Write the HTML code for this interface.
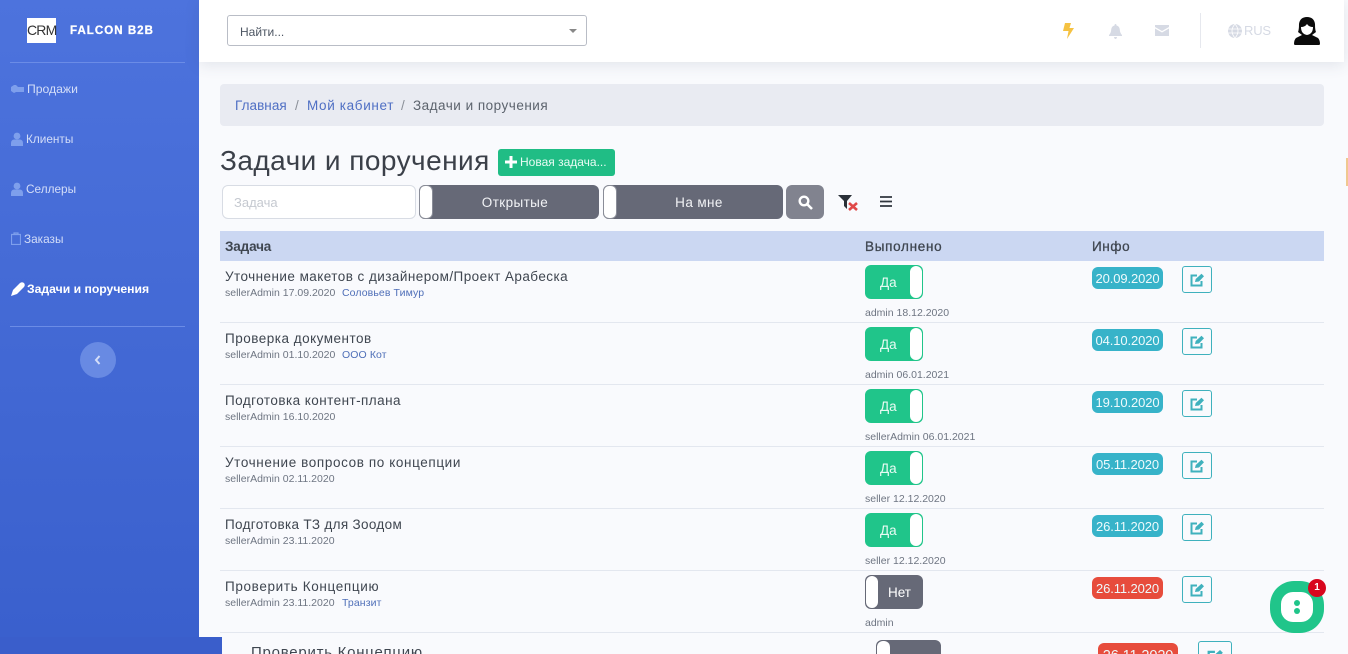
<!DOCTYPE html>
<html lang="ru"><head><meta charset="utf-8"><title>Задачи и поручения</title>
<style>
*{box-sizing:border-box}
html,body{margin:0;padding:0;width:1348px;height:654px;overflow:hidden;background:#f9fafd}
body{font-family:"Liberation Sans","Noto Sans CJK SC",sans-serif;color:#3e4450;position:relative}
div,a,span{position:absolute;white-space:nowrap}
svg{position:absolute;display:block}
.nav{left:0;font-size:12.2px;color:#d4def8;letter-spacing:0;margin-top:1px}
.t{left:225px;font-size:13.5px;letter-spacing:.45px;color:#3f4650;line-height:16px;margin-top:1px}
.s{left:225px;font-size:10.5px;color:#6e7582;line-height:13px;letter-spacing:0;margin-top:1px}
.l{font-size:10.5px;color:#4f6fb8;line-height:13px;letter-spacing:.1px;margin-top:1px}
.sep{left:220px;width:1104px;height:1px;background:#e3e7ef}
.tg{left:865px;width:58px;height:34px;background:#20c58a;border-radius:6px;color:#e8fbf3;font-size:13.5px;line-height:36px}
.tg i{position:absolute;right:1px;top:1px;width:12px;height:32px;background:#fff;border-radius:6px}
.tg b{position:absolute;left:15px;font-weight:400}
.no{background:#666977;color:#fff}
.no i{left:1px;right:auto}
.no b{left:23px}
.u{left:865px;font-size:10.5px;color:#6e7582;line-height:13px;letter-spacing:0;margin-top:1px}
.bd{left:1092px;width:71px;height:22px;border-radius:6px;background:#37b3c9;color:#eefafc;font-size:13px;line-height:24px;text-align:center;letter-spacing:-.1px}
.red{background:#e74c3c}
.ed{left:1182px;width:30px;height:27px;border:1px solid #3fb1bd;border-radius:3px;background:#f9fafd}
.ed svg{left:7px;top:6px}
.th{font-size:13.5px;font-weight:700;color:#3f4650;letter-spacing:.35px;line-height:16px;top:239px}
.bigt{left:419px;height:34px;background:#666977;border-radius:6px;color:#f2f3f6;font-size:13.5px;line-height:36px;text-align:center;letter-spacing:.4px}
.bigt i{position:absolute;left:0;top:0;width:14px;height:34px;background:#fff;border:1px solid #8a8d98;border-radius:6px}
</style></head>
<body>
<div style="left:0;top:0;width:199px;height:637px;background:linear-gradient(180deg,#4d73dd,#3a60cd)"></div>
<div style="left:0;top:637px;width:222px;height:17px;background:#3a5ecb"></div>
<div style="left:199px;top:0;width:1145px;height:62px;background:#fff;box-shadow:0 3px 14px rgba(60,70,100,.12)"></div>
<div style="left:1346px;top:158px;width:2px;height:28px;background:#f0c890"></div>

<div style="left:27px;top:18px;width:29px;height:25px;background:#fff;color:#333;font-size:14px;line-height:25px;text-align:center;letter-spacing:-.8px">CRM</div>
<div style="left:70px;top:24px;font-size:11.5px;font-weight:700;color:#fff;letter-spacing:1.05px;line-height:14px;-webkit-text-stroke:.3px #fff">FALCON B2B</div>
<div style="left:10px;top:62px;width:175px;height:1px;background:#6b8ce6"></div>
<div style="left:10px;top:326px;width:175px;height:1px;background:#6b8ce6"></div>

<svg style="left:11px;top:85px" width="13" height="8" viewBox="0 0 13 8"><path d="M0 2 3 0h2l2 2h6v5H5L3 8 0 6z" fill="#7e9fec"/></svg>
<div class="nav" style="left:27px;top:81px">Продажи</div>
<svg style="left:11px;top:132px" width="12" height="14" viewBox="0 0 12 14"><circle cx="6" cy="4" r="3.4" fill="#7e9fec"/><path d="M0 14v-3q0-3 3-3.500h6q3 .5 3 3.500v3z" fill="#7e9fec"/></svg>
<div class="nav" style="left:26px;top:131px;font-size:11.8px">Клиенты</div>
<svg style="left:11px;top:182px" width="12" height="14" viewBox="0 0 12 14"><circle cx="6" cy="4" r="3.400" fill="#7e9fec"/><path d="M0 14v-3q0-3 3-3.500h6q3 .5 3 3.500v3z" fill="#7e9fec"/></svg>
<div class="nav" style="left:26px;top:181px;font-size:11.8px">Селлеры</div>
<svg style="left:11px;top:232px" width="10" height="13" viewBox="0 0 10 13"><path d="M.5 2.500h9v10h-9zM3 2.500V1h4v1.500" fill="none" stroke="#7e9fec" stroke-width="1.200"/></svg>
<div class="nav" style="left:24px;top:231px;font-size:11.8px">Заказы</div>
<svg style="left:11px;top:282px" width="14" height="14" viewBox="0 0 14 14"><path d="M0 14 2 8 9 1q2-1.500 4 0 1.500 2 0 4L6 12z" fill="#fff"/></svg>
<div class="nav" style="left:27px;top:281px;color:#fff;font-weight:700;font-size:12.2px;letter-spacing:0">Задачи и поручения</div>
<div style="left:80px;top:342px;width:36px;height:36px;border-radius:50%;background:#688ae3"></div>
<svg style="left:94px;top:355px" width="7" height="10" viewBox="0 0 7 10"><path d="M5.500 1 2 5l3.500 4" fill="none" stroke="#d4def8" stroke-width="2"/></svg>

<div style="left:227px;top:15px;width:360px;height:31px;background:#fff;border:1px solid #b9bdc6;border-radius:3px"></div>
<div style="left:240px;top:24px;font-size:12px;color:#4d5663;line-height:16px">Найти...</div>
<svg style="left:569px;top:29px" width="8" height="4" viewBox="0 0 8 4"><path d="M0 0h8L4 4z" fill="#888"/></svg>

<svg style="left:1063px;top:23px" width="11" height="16" viewBox="0 0 11 16"><path d="M2 0h6L6.500 5H11L4 16l1.500-8H0z" fill="#f5c242"/></svg>
<svg style="left:1109px;top:24px" width="13" height="15" viewBox="0 0 13 15"><path d="M6.500 0q1 0 1 1.500 3 .8 3.300 4 .1 3.500 2.200 5.500v1H0v-1q2.100-2 2.200-5.500.3-3.200 3.300-4Q5.500 0 6.500 0zM5 13h3q-.3 2-1.500 2T5 13z" fill="#d6dae4"/></svg>
<svg style="left:1155px;top:25px" width="14" height="11" viewBox="0 0 14 11"><path d="M0 0h14v2L7 6 0 2zM0 3.500 7 7.500l7-4V11H0z" fill="#d6dae4"/></svg>
<div style="left:1200px;top:13px;width:1px;height:35px;background:#e6e8ee"></div>
<svg style="left:1228px;top:24px" width="14" height="14" viewBox="0 0 14 14"><circle cx="7" cy="7" r="7" fill="#d6dae4"/><path d="M0 5h14M0 9h14M7 0q-6 7 0 14M7 0q6 7 0 14" stroke="#fff" stroke-width=".8" fill="none"/></svg>
<div style="left:1244px;top:23px;font-size:13px;color:#d6dae4;line-height:16px;letter-spacing:-.2px">RUS</div>
<svg style="left:1294px;top:17px" width="26" height="28" viewBox="0 0 26 28"><path d="M13 0q7 0 8 7 0 6 1 8l-4 3 6 3q2 2 2 6 0 1-2 1H2q-2 0-2-1 0-4 2-6l6-3-4-3q1-2 1-8 1-7 8-7z" fill="#0b0b0b"/><path d="M7 10q4 0 6-3 2 3 6 3 0 7-6 8-6-1-6-8z" fill="#fff"/></svg>

<div style="left:220px;top:84px;width:1104px;height:42px;background:#e9ebf2;border-radius:4px"></div>
<div style="left:235px;top:98px;font-size:13.5px;line-height:16px;letter-spacing:.05px;color:#4f6fc4">Главная</div>
<div style="left:295px;top:98px;font-size:13.5px;line-height:16px;color:#8a8f98">/</div>
<div style="left:307px;top:98px;font-size:13.5px;line-height:16px;letter-spacing:.65px;color:#4f6fc4">Мой кабинет</div>
<div style="left:401px;top:98px;font-size:13.5px;line-height:16px;color:#8a8f98">/</div>
<div style="left:413px;top:98px;font-size:13.5px;line-height:16px;letter-spacing:.5px;color:#5c636d">Задачи и поручения</div>

<div style="left:220px;top:143px;font-size:28px;line-height:36px;color:#3b4049;letter-spacing:.45px">Задачи и поручения</div>
<div style="left:498px;top:149px;width:117px;height:27px;background:#20bd85;border-radius:3px"></div>
<svg style="left:505px;top:156px" width="12" height="12" viewBox="0 0 12 12"><path d="M4.500 0h3v4.500H12v3H7.500V12h-3V7.500H0v-3h4.500z" fill="#fff"/></svg>
<div style="left:520px;top:155px;font-size:12px;color:#e9fbf4;line-height:15px;letter-spacing:0">Новая задача...</div>

<div style="left:222px;top:185px;width:194px;height:34px;background:#fff;border:1px solid #d8dce4;border-radius:6px"></div>
<div style="left:234px;top:195px;font-size:13px;color:#c5c9d0;line-height:16px">Задача</div>
<div class="bigt" style="left:419px;width:180px;top:185px;padding-left:12px"><i></i>Открытые</div>
<div class="bigt" style="left:603px;width:180px;top:185px;padding-left:12px"><i></i>На мне</div>
<div style="left:786px;top:185px;width:38px;height:34px;background:#81838f;border-radius:6px"></div>
<svg style="left:798px;top:195px" width="15" height="15" viewBox="0 0 15 15"><circle cx="6" cy="6" r="4.300" fill="none" stroke="#fff" stroke-width="2.400"/><path d="M9.500 9.500 14 14" stroke="#fff" stroke-width="2.600"/></svg>
<svg style="left:838px;top:194px" width="22" height="18" viewBox="0 0 22 18"><path d="M0 1h14L9 7v8L6 12V7z" fill="#2a3038"/><path d="M11 9l8 7M19 9l-8 7" stroke="#e04848" stroke-width="2.600"/></svg>
<svg style="left:880px;top:196px" width="12" height="11" viewBox="0 0 12 11"><path d="M0 1h12M0 5.500h12M0 10h12" stroke="#30363e" stroke-width="1.800"/></svg>

<div style="left:220px;top:231px;width:1104px;height:30px;background:#cbd7f2"></div>
<div class="th" style="left:225px;letter-spacing:-.15px">Задача</div>
<div class="th" style="left:865px;font-weight:400;-webkit-text-stroke:.3px #3f4650;letter-spacing:.7px">Выполнено</div>
<div class="th" style="left:1092px;font-weight:400;-webkit-text-stroke:.3px #3f4650;letter-spacing:.6px">Инфо</div>

<div class="t" style="top:268px">Уточнение макетов с дизайнером/Проект Арабеска</div>
<div class="s" style="top:286px">sellerAdmin 17.09.2020</div><div class="l" style="left:342px;top:286px">Соловьев Тимур</div>
<div class="tg" style="top:265px"><b>Да</b><i></i></div><div class="u" style="top:306px">admin 18.12.2020</div>
<div class="bd" style="top:267px">20.09.2020</div>
<div class="ed" style="top:266px"><svg width="15" height="14" viewBox="0 0 15 14"><path d="M7 2.500H1.500v10h10V8" fill="none" stroke="#3fb1bd" stroke-width="2"/><path d="M5 9l.7-3L11.500.8l2.500 2.500L9 8.500z" fill="#3fb1bd"/></svg></div>
<div class="sep" style="top:322px"></div>

<div class="t" style="top:330px;letter-spacing:.5px">Проверка документов</div>
<div class="s" style="top:348px">sellerAdmin 01.10.2020</div><div class="l" style="left:342px;top:348px">ООО Кот</div>
<div class="tg" style="top:327px"><b>Да</b><i></i></div><div class="u" style="top:368px">admin 06.01.2021</div>
<div class="bd" style="top:329px">04.10.2020</div>
<div class="ed" style="top:328px"><svg width="15" height="14" viewBox="0 0 15 14"><path d="M7 2.500H1.500v10h10V8" fill="none" stroke="#3fb1bd" stroke-width="2"/><path d="M5 9l.7-3L11.500.8l2.500 2.500L9 8.500z" fill="#3fb1bd"/></svg></div>
<div class="sep" style="top:384px"></div>

<div class="t" style="top:392px">Подготовка контент-плана</div>
<div class="s" style="top:410px">sellerAdmin 16.10.2020</div>
<div class="tg" style="top:389px"><b>Да</b><i></i></div><div class="u" style="top:430px">sellerAdmin 06.01.2021</div>
<div class="bd" style="top:391px">19.10.2020</div>
<div class="ed" style="top:390px"><svg width="15" height="14" viewBox="0 0 15 14"><path d="M7 2.500H1.500v10h10V8" fill="none" stroke="#3fb1bd" stroke-width="2"/><path d="M5 9l.7-3L11.500.8l2.500 2.500L9 8.500z" fill="#3fb1bd"/></svg></div>
<div class="sep" style="top:446px"></div>

<div class="t" style="top:454px;letter-spacing:.61px">Уточнение вопросов по концепции</div>
<div class="s" style="top:472px">sellerAdmin 02.11.2020</div>
<div class="tg" style="top:451px"><b>Да</b><i></i></div><div class="u" style="top:492px">seller 12.12.2020</div>
<div class="bd" style="top:453px">05.11.2020</div>
<div class="ed" style="top:452px"><svg width="15" height="14" viewBox="0 0 15 14"><path d="M7 2.500H1.500v10h10V8" fill="none" stroke="#3fb1bd" stroke-width="2"/><path d="M5 9l.7-3L11.500.8l2.500 2.500L9 8.500z" fill="#3fb1bd"/></svg></div>
<div class="sep" style="top:508px"></div>

<div class="t" style="top:516px;letter-spacing:.33px">Подготовка ТЗ для Зоодом</div>
<div class="s" style="top:534px">sellerAdmin 23.11.2020</div>
<div class="tg" style="top:513px"><b>Да</b><i></i></div><div class="u" style="top:554px">seller 12.12.2020</div>
<div class="bd" style="top:515px">26.11.2020</div>
<div class="ed" style="top:514px"><svg width="15" height="14" viewBox="0 0 15 14"><path d="M7 2.500H1.500v10h10V8" fill="none" stroke="#3fb1bd" stroke-width="2"/><path d="M5 9l.7-3L11.500.8l2.500 2.500L9 8.500z" fill="#3fb1bd"/></svg></div>
<div class="sep" style="top:570px"></div>

<div class="t" style="top:578px;letter-spacing:.65px">Проверить Концепцию</div>
<div class="s" style="top:596px">sellerAdmin 23.11.2020</div><div class="l" style="left:342px;top:596px">Транзит</div>
<div class="tg no" style="top:575px"><i></i><b>Нет</b></div><div class="u" style="top:616px">admin</div>
<div class="bd red" style="top:577px">26.11.2020</div>
<div class="ed" style="top:576px"><svg width="15" height="14" viewBox="0 0 15 14"><path d="M7 2.500H1.500v10h10V8" fill="none" stroke="#3fb1bd" stroke-width="2"/><path d="M5 9l.7-3L11.500.8l2.500 2.500L9 8.500z" fill="#3fb1bd"/></svg></div>
<div class="sep" style="top:632px"></div>

<div style="left:251px;top:644px;font-size:15px;letter-spacing:.75px;color:#3f4650;line-height:18px">Проверить Концепцию</div>
<div style="left:876px;top:640px;width:65px;height:38px;background:#666977;border-radius:6px"><i style="position:absolute;left:1px;top:1px;width:13px;height:36px;background:#fff;border-radius:6px"></i></div>
<div class="bd red" style="left:1098px;top:643px;width:80px;height:25px;font-size:14.500px;line-height:27px">26.11.2020</div>
<div class="ed" style="left:1198px;top:641px;width:34px;height:30px"><svg style="left:8px;top:7px" width="17" height="16" viewBox="0 0 15 14"><path d="M7 2.500H1.500v10h10V8" fill="none" stroke="#3fb1bd" stroke-width="2"/><path d="M5 9l.7-3L11.500.8l2.500 2.500L9 8.500z" fill="#3fb1bd"/></svg></div>

<div style="left:1270px;top:581px;width:54px;height:52px;background:#20c58a;border-radius:24px"></div>
<div style="left:1281px;top:592px;width:32px;height:30px;background:#fff;border-radius:12px"></div>
<div style="left:1294px;top:600px;width:6px;height:6px;background:#20c58a;border-radius:50%"></div>
<div style="left:1294px;top:608px;width:6px;height:6px;background:#20c58a;border-radius:50%"></div>
<div style="left:1308px;top:579px;width:18px;height:18px;background:#d8061d;border-radius:50%;color:#fff;font-size:10px;font-weight:700;line-height:18px;text-align:center">1</div>
</body></html>
